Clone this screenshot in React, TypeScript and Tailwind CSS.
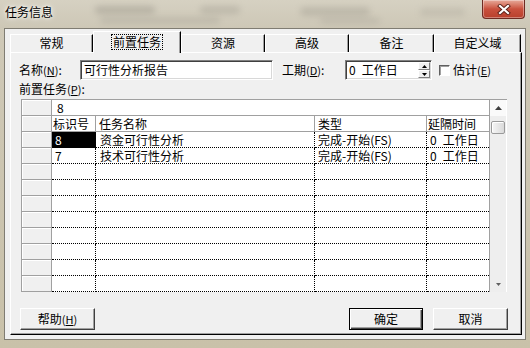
import React from 'react';

const tabs = [
  { label: '常规', cls: 'w-[83px]', sel: false },
  { label: '前置任务', cls: 'w-[88px]', sel: true },
  { label: '资源', cls: 'w-[84px]', sel: false },
  { label: '高级', cls: 'w-[84px]', sel: false },
  { label: '备注', cls: 'w-[85px]', sel: false },
  { label: '自定义域', cls: 'w-[87px]', sel: false },
];

type Row = { id?: string; name?: string; type?: string; lag?: string; sel?: boolean };
const rows: Row[] = [
  { id: '8', name: '资金可行性分析', type: '完成-开始(FS)', lag: '0\u2002工作日', sel: true },
  { id: '7', name: '技术可行性分析', type: '完成-开始(FS)', lag: '0\u2002工作日' },
  {}, {}, {}, {}, {}, {}, {}, {},
];

function Mn({ k }: { k: string }) {
  return (
    <span className="text-[11px]">
      (<span className="underline">{k}</span>)
    </span>
  );
}

function RH() {
  return (
    <div className="w-[30px] h-full shrink-0 bg-[#f0f0f0] border-r border-b border-[#a0a0a0] shadow-[inset_1px_1px_0_#ffffff]" />
  );
}

const sunken =
  'border border-t-[#808080] border-l-[#808080] border-b-white border-r-white shadow-[inset_1px_1px_0_#404040,inset_-1px_-1px_0_#d8d8d8] bg-white';

function TitleBar() {
  return (
    <div className="relative h-[28px] flex items-start bg-gradient-to-b from-[#d6d1c2] to-[#cdc7b6]">
      <div className="absolute left-[95px] top-[6px] w-[60px] h-[8px] rounded-full bg-[#8f8b80] opacity-40 blur-[3px]" />
      <div className="absolute left-[100px] top-[17px] w-[120px] h-[7px] rounded-full bg-[#9a968b] opacity-30 blur-[3px]" />
      <div className="absolute left-[200px] top-[6px] w-[40px] h-[8px] rounded-full bg-[#8f8b80] opacity-30 blur-[3px]" />
      <div className="absolute left-[300px] top-[7px] w-[70px] h-[9px] rounded-full bg-[#8f8b80] opacity-30 blur-[3px]" />
      <div className="absolute left-[320px] top-[18px] w-[60px] h-[6px] rounded-full bg-[#9a968b] opacity-30 blur-[3px]" />
      <div className="absolute left-[420px] top-[8px] w-[45px] h-[8px] rounded-full bg-[#9a968b] opacity-25 blur-[3px]" />
      <span className="relative pl-[5px] pt-[4px] text-[12px] leading-[16px] [text-shadow:0_0_6px_#ffffff,0_0_3px_#ffffff]">
        任务信息
      </span>
      <div className="relative ml-auto mr-[5px] w-[43px] h-[19px] rounded-b-[4px] border border-t-0 border-[#6e2b22] bg-gradient-to-b from-[#e6a99a] via-[#c9503d] to-[#b8402c] flex items-center justify-center shadow-[inset_0_0_0_1px_rgba(255,255,255,0.35)]">
        <svg width="14" height="11" viewBox="0 0 14 11">
          <path d="M3 2 L11 9 M11 2 L3 9" stroke="#5a2018" strokeWidth="4" strokeLinecap="square" />
          <path d="M3 2 L11 9 M11 2 L3 9" stroke="#ffffff" strokeWidth="2.2" strokeLinecap="square" />
        </svg>
      </div>
    </div>
  );
}

function Tabs() {
  return (
    <div className="relative z-10 flex items-end h-[21px]">
      {tabs.map((t) =>
        t.sel ? (
          <div
            key={t.label}
            className={`${t.cls} h-[22px] -mb-[1px] bg-[#f0f0f0] border-l border-t border-white border-r border-r-black shadow-[inset_-1px_0_0_#a0a0a0] flex justify-center pt-[2px]`}
          >
            <span className="h-[16px] px-[1px] border border-dotted border-black leading-[14px]">{t.label}</span>
          </div>
        ) : (
          <div
            key={t.label}
            className={`${t.cls} h-[18px] bg-[#f0f0f0] border-l border-t border-white border-r border-r-black shadow-[inset_-1px_0_0_#a0a0a0] text-center leading-[16px]`}
          >
            {t.label}
          </div>
        )
      )}
    </div>
  );
}

function Scrollbar() {
  return (
    <div className="w-[17px] h-full flex flex-col bg-[#eeeeee] border-r border-white">
      <div className="h-[16px] flex items-center justify-center bg-[#fafafa]">
        <svg width="7" height="4" viewBox="0 0 7 4">
          <path d="M0 4 L3.5 0 L7 4 Z" fill="#404040" />
        </svg>
      </div>
      <div className="mt-[5px] mx-[1px] h-[13px] rounded-[2px] border border-[#9a9a9a] bg-gradient-to-r from-[#f6f6f6] to-[#dadada] shadow-[inset_1px_1px_0_#ffffff]" />
      <div className="flex-1" />
      <div className="h-[16px] flex items-center justify-center">
        <svg width="5" height="3" viewBox="0 0 5 3">
          <path d="M0 0 L5 0 L2.5 3 Z" fill="#606060" />
        </svg>
      </div>
    </div>
  );
}

function Grid() {
  return (
    <div className="ml-[2px] mt-[2px] w-[486px] h-[193px] flex border-t border-[#a0a0a0]">
      <div className="w-[469px] h-full flex flex-col border-l border-r border-[#a0a0a0] bg-white">
        <div className="flex h-[16px]">
          <RH />
          <div className="flex-1 bg-white border-b border-[#a0a0a0] pl-[5px] leading-[15px]">8</div>
        </div>
        <div className="flex h-[16px]">
          <RH />
          <div className="w-[44px] bg-white border-r border-b border-[#a0a0a0] pl-[1px] leading-[15px]">标识号</div>
          <div className="w-[219px] bg-white border-r border-b border-[#a0a0a0] pl-[3px] leading-[15px]">任务名称</div>
          <div className="w-[112px] bg-white border-r border-b border-[#a0a0a0] pl-[3px] leading-[15px]">类型</div>
          <div className="flex-1 bg-white border-b border-[#a0a0a0] pl-[1px] leading-[15px]">延隔时间</div>
        </div>
        {rows.map((r, i) => (
          <div key={i} className="flex h-[16px]">
            <RH />
            <div
              className={`w-[44px] border-r border-b border-dotted border-black pl-[3px] leading-[15px] ${
                r.sel ? 'bg-black text-white' : 'bg-white'
              }`}
            >
              {r.id}
            </div>
            <div className="w-[219px] bg-white border-r border-b border-dotted border-black pl-[4px] leading-[15px]">{r.name}</div>
            <div className="w-[112px] bg-white border-r border-b border-dotted border-black pl-[3px] leading-[15px] whitespace-nowrap">
              {r.type}
            </div>
            <div className="flex-1 bg-white border-b border-dotted border-black pl-[3px] leading-[15px] whitespace-nowrap">{r.lag}</div>
          </div>
        ))}
      </div>
      <Scrollbar />
    </div>
  );
}

function Panel() {
  return (
    <div className="w-[512px] h-[283px] border border-l-white border-t-white border-r-black border-b-black shadow-[inset_-1px_-1px_0_#a0a0a0] flex flex-col pl-[8px] pt-[7px]">
      <div className="flex items-center h-[20px]">
        <div className="w-[61px] whitespace-nowrap">
          名称<Mn k="N" />:
        </div>
        <div className={`w-[193px] h-[20px] ${sunken} pl-[3px] flex items-center`}>可行性分析报告</div>
        <div className="ml-[9px] w-[63px] whitespace-nowrap">
          工期<Mn k="D" />:
        </div>
        <div className={`w-[87px] h-[20px] ${sunken} flex`}>
          <div className="flex-1 pl-[3px] flex items-center whitespace-nowrap">0{'\u2002'}工作日</div>
          <div className="w-[13px] h-full flex flex-col py-[1px] pr-[1px]">
            <div className="flex-1 bg-[#f0f0f0] border border-t-white border-l-white border-b-[#808080] border-r-[#808080] flex items-center justify-center">
              <svg width="5" height="3" viewBox="0 0 5 3">
                <path d="M0 3 L2.5 0 L5 3 Z" fill="#000000" />
              </svg>
            </div>
            <div className="flex-1 bg-[#f0f0f0] border border-t-white border-l-white border-b-[#808080] border-r-[#808080] flex items-center justify-center">
              <svg width="5" height="3" viewBox="0 0 5 3">
                <path d="M0 0 L5 0 L2.5 3 Z" fill="#000000" />
              </svg>
            </div>
          </div>
        </div>
        <div className="ml-[7px] w-[11px] h-[11px] bg-white border border-t-[#606060] border-l-[#606060] border-b-white border-r-white shadow-[inset_1px_1px_0_#a0a0a0]" />
        <div className="ml-[3px] whitespace-nowrap">
          估计<Mn k="E" />
        </div>
      </div>
      <div className="mt-[1px] h-[16px] whitespace-nowrap">
        前置任务<Mn k="P" />:
      </div>
      <Grid />
      <div className="mt-[16px] flex">
        <div className="ml-[1px] w-[75px] h-[22px] bg-[#f0f0f0] border border-t-white border-l-white border-b-[#404040] border-r-[#404040] shadow-[inset_-1px_-1px_0_#a0a0a0] flex items-center justify-center">
          帮助<Mn k="H" />
        </div>
        <div className="ml-auto w-[74px] h-[22px] bg-[#f0f0f0] border border-black shadow-[inset_1px_1px_0_#ffffff,inset_-1px_-1px_0_#404040,inset_-2px_-2px_0_#a0a0a0] flex items-center justify-center">
          确定
        </div>
        <div className="ml-[10px] mr-[13px] w-[75px] h-[22px] bg-[#f0f0f0] border border-t-white border-l-white border-b-[#404040] border-r-[#404040] shadow-[inset_-1px_-1px_0_#a0a0a0] flex items-center justify-center">
          取消
        </div>
      </div>
    </div>
  );
}

export default function App() {
  return (
    <div className="relative w-[530px] h-[348px] overflow-hidden bg-gradient-to-b from-[#cfc9b8] to-[#c9c1a9] font-['Noto_Sans_CJK_SC','Noto_Sans',sans-serif] text-[12px] leading-[16px] text-black">
      <TitleBar />
      <div className="mx-[4px] h-[312px] bg-[#f0f0f0] border border-[#7f7c72] pl-[5px] pt-[2px]">
        <Tabs />
        <Panel />
      </div>
    </div>
  );
}
